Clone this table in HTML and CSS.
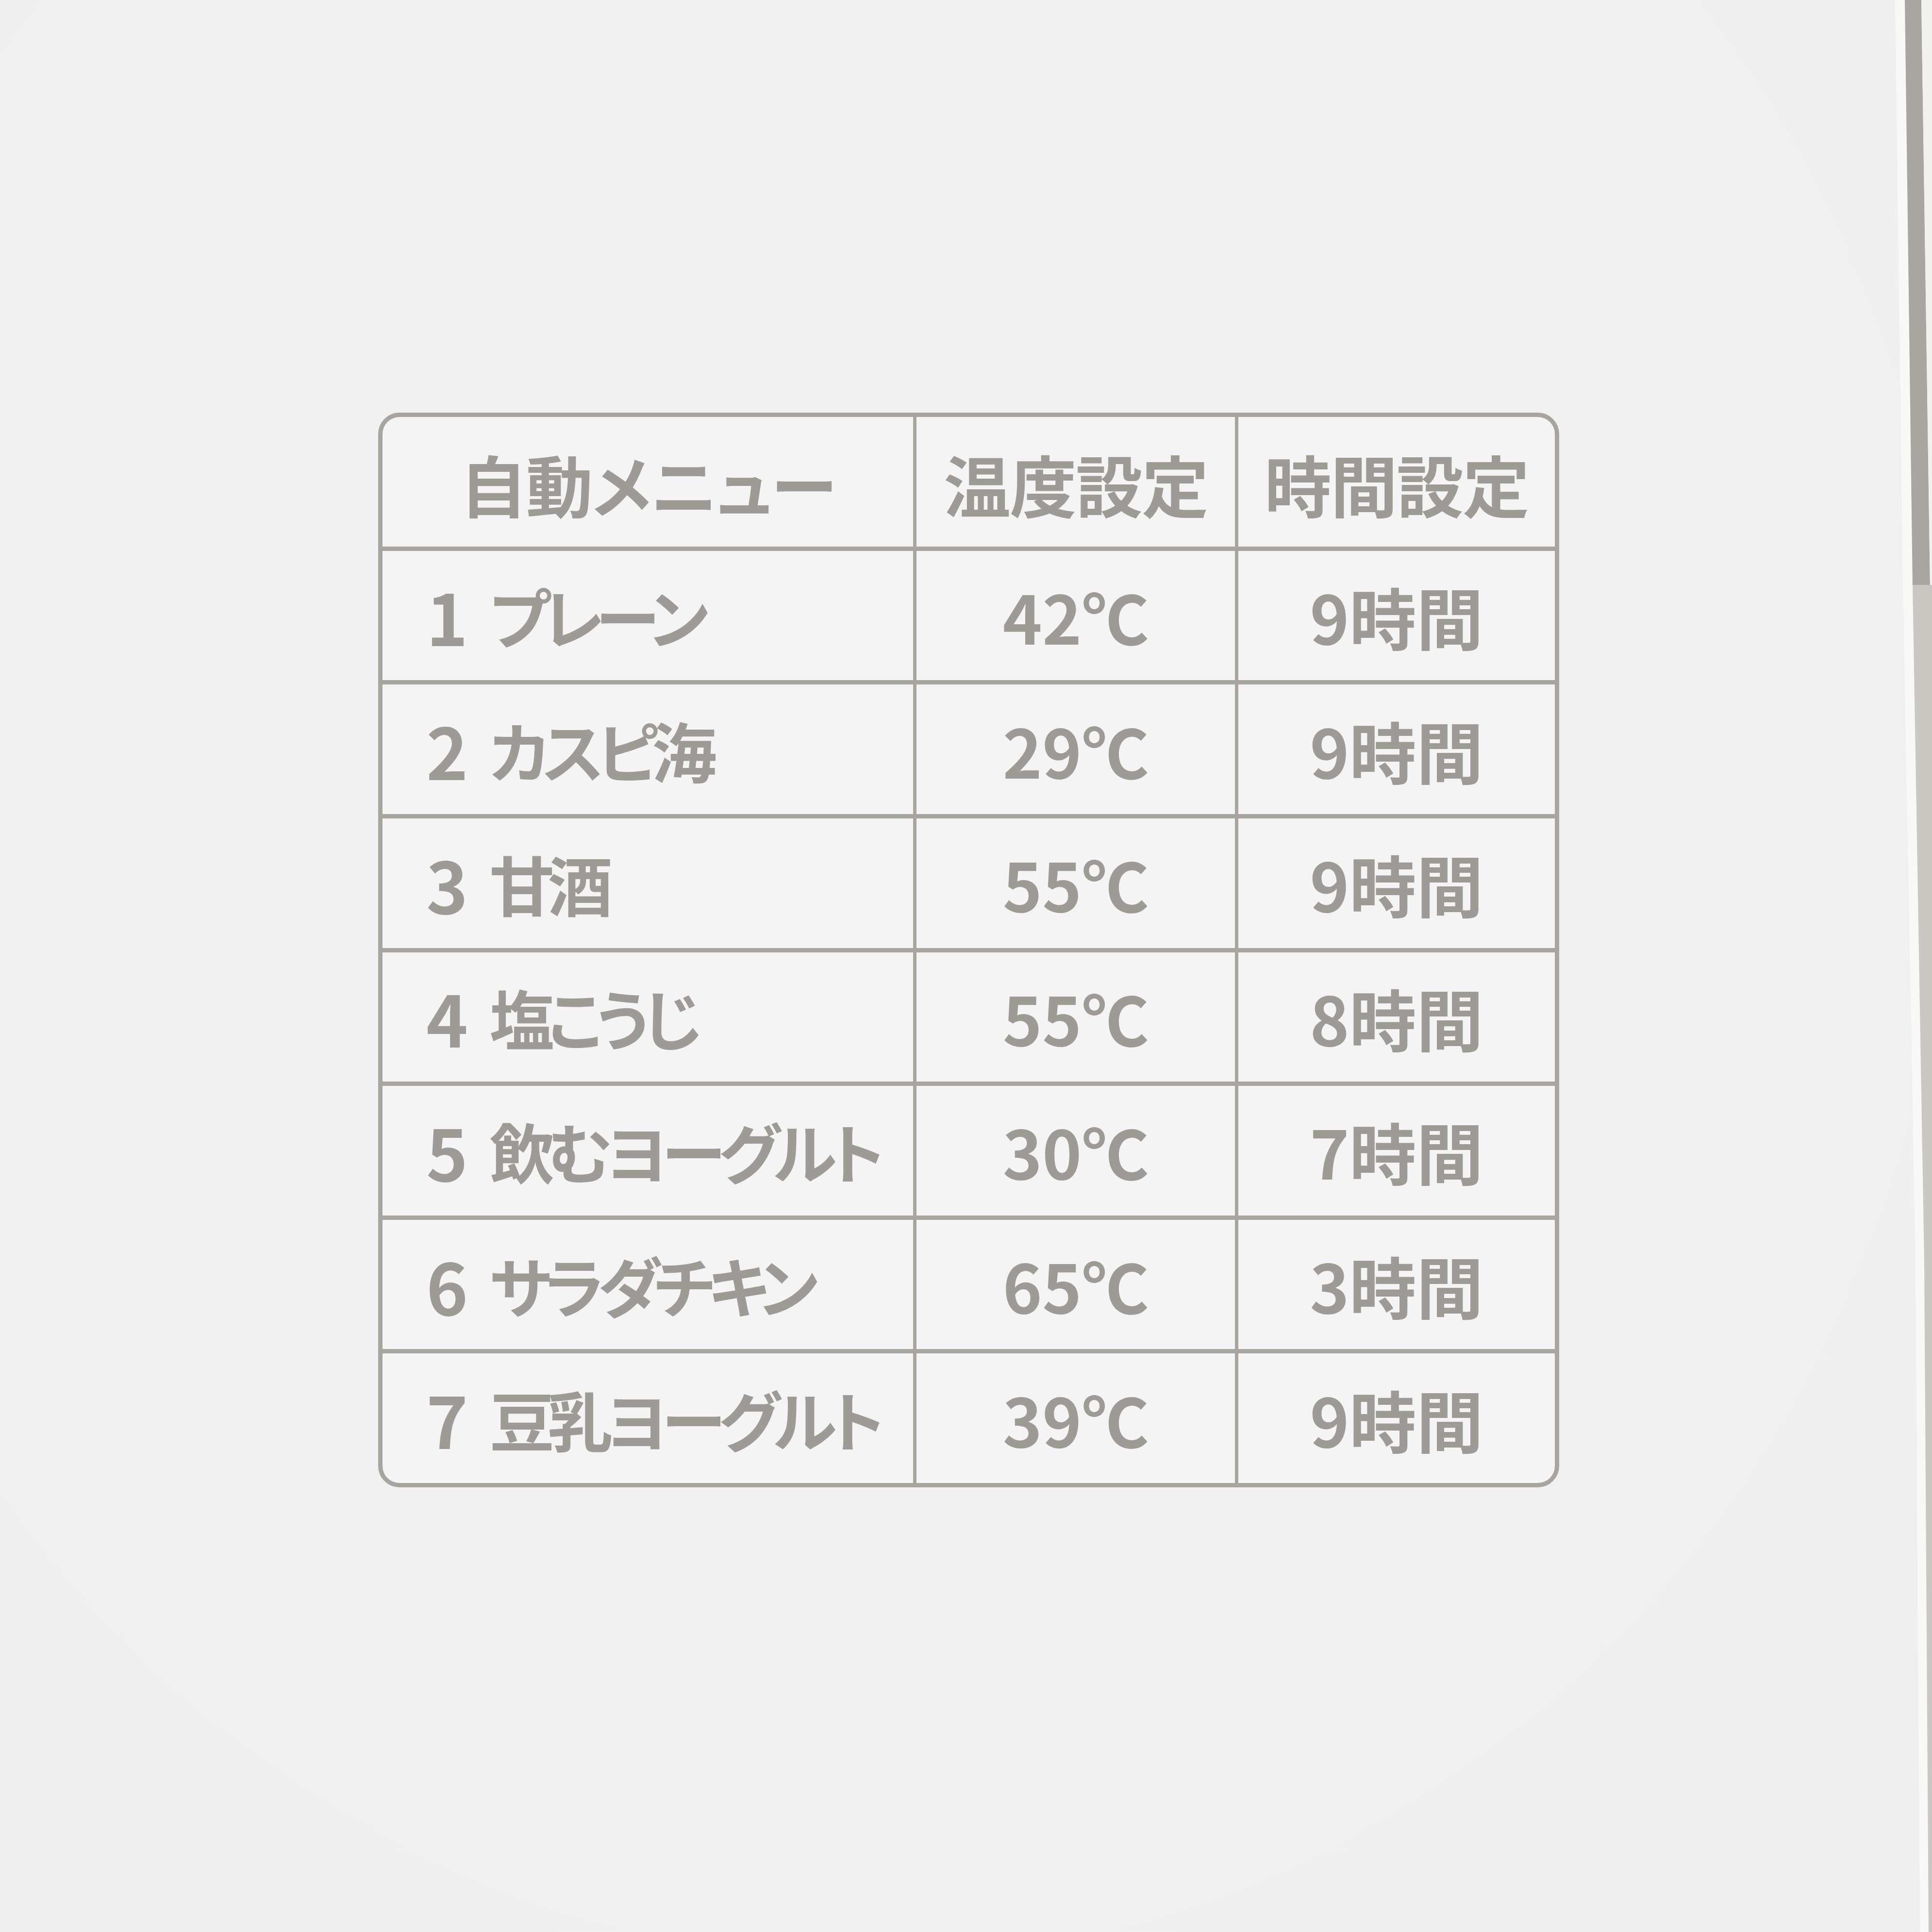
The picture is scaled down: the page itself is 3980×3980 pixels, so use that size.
FILE: index.html
```html
<!DOCTYPE html>
<html lang="ja">
<head>
<meta charset="utf-8">
<title>自動メニュー</title>
<link rel="stylesheet" href="styles.css">
</head>
<body>
<div class="page">
  <div class="menu-table">
    <div class="cell head">自動メニュー</div>
    <div class="cell head">温度設定</div>
    <div class="cell head">時間設定</div>

    <div class="cell name"><span class="num">1</span>プレーン</div>
    <div class="cell val">42℃</div>
    <div class="cell val">9時間</div>

    <div class="cell name"><span class="num">2</span>カスピ海</div>
    <div class="cell val">29℃</div>
    <div class="cell val">9時間</div>

    <div class="cell name"><span class="num">3</span>甘酒</div>
    <div class="cell val">55℃</div>
    <div class="cell val">9時間</div>

    <div class="cell name"><span class="num">4</span>塩こうじ</div>
    <div class="cell val">55℃</div>
    <div class="cell val">8時間</div>

    <div class="cell name"><span class="num">5</span>飲むヨーグルト</div>
    <div class="cell val">30℃</div>
    <div class="cell val">7時間</div>

    <div class="cell name"><span class="num">6</span>サラダチキン</div>
    <div class="cell val">65℃</div>
    <div class="cell val">3時間</div>

    <div class="cell name"><span class="num">7</span>豆乳ヨーグルト</div>
    <div class="cell val">39℃</div>
    <div class="cell val">9時間</div>
  </div>

  <svg class="edge" width="80" height="3980" viewBox="0 0 80 3980" aria-hidden="true">
    <polygon points="4,0 24,0 40,1205 64,2600 73,3980 55,3980 46,2600 20,1205" fill="#f8f8f7"/>
    <polygon points="24,0 58,0 76,1205 40,1205" fill="#a9a5a1"/>
    <polygon points="40,1205 80,1205 80,3980 73,3980 64,2600" fill="#cbc8c4"/>
    <polygon points="58,0 80,0 80,1205 76,1205" fill="#f1f1f0"/>
  </svg>
</div>
</body>
</html>
```

FILE: styles.css
```css
html, body {
  margin: 0;
  padding: 0;
}

body {
  background: #f0f0f0;
  font-family: "Noto Sans CJK JP", "Noto Sans", sans-serif;
}

.page {
  position: relative;
  width: 3980px;
  height: 3980px;
  box-sizing: border-box;
  padding: 850px 0 0 779px;
  background: radial-gradient(ellipse at 45% 40%, #f2f2f2 0%, #f0f0f0 65%, #eeeeee 100%);
  overflow: hidden;
}

.menu-table {
  width: 2433px;
  height: 2214px;
  box-sizing: border-box;
  border: 9px solid #a8a5a1;
  border-radius: 44px;
  background: #a8a5a1;
  overflow: hidden;
  display: grid;
  grid-template-columns: 1093px 656px 1fr;
  grid-template-rows: repeat(8, 1fr);
  gap: 9px 7px;
}

.cell {
  background: #f4f4f4;
  color: #9e9b97;
  font-weight: 700;
  display: flex;
  align-items: center;
  justify-content: center;
  font-feature-settings: "palt";
  white-space: nowrap;
}

.head {
  font-size: 138px;
  letter-spacing: -2px;
  padding-top: 6px;
}

.name {
  justify-content: flex-start;
  padding-left: 90px;
  font-size: 134px;
  letter-spacing: -14px;
}

.num {
  font-size: 146px;
  letter-spacing: 0;
  margin-right: 44px;
}

.val {
  font-size: 138px;
}

.edge {
  position: absolute;
  top: 0;
  right: 0;
  display: block;
}
```
